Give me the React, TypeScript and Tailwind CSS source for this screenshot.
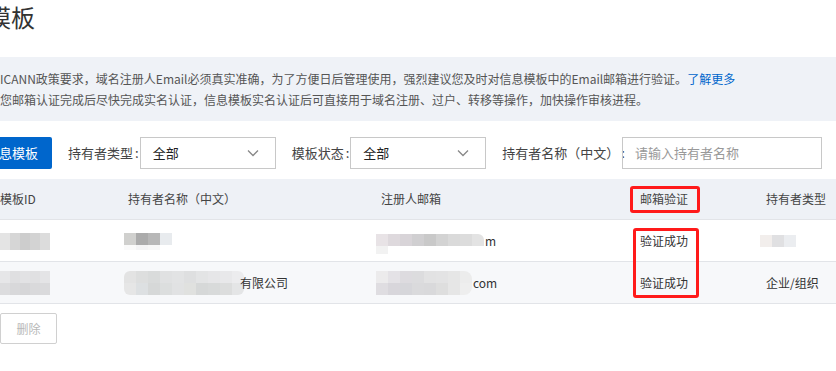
import React from "react"

const font = { fontFamily: '"Microsoft YaHei", "Noto Sans CJK SC", "Noto Sans", sans-serif' }

type MosaicProps = {
  rows: string[][],
  w?: number,
  h?: number[],
  className?: string,
}

// pixelated blur block standing in for hidden personal data
function Mosaic({ rows, w = 12, h = [], className = "" }: MosaicProps) {
  return (
    <div className={`flex flex-col ${className}`}>
      {rows.map((row, i) => (
        <div key={i} className="flex">
          {row.map((c, j) => (
            <div key={j} style={{ width: w, height: h[i] ?? 12, background: c }} />
          ))}
        </div>
      ))}
    </div>
  )
}

function Chevron() {
  return (
    <svg width="12" height="8" viewBox="0 0 12 8" fill="none" stroke="#888" strokeWidth="1.3">
      <path d="M1 1.5 L6 6.5 L11 1.5" />
    </svg>
  )
}

function Select({ className = "" }: { className?: string }) {
  return (
    <div className={`h-[32px] shrink-0 border border-[#c8c8c8] bg-white flex items-center justify-between pl-[12px] pr-[16px] ${className}`}>
      <span className="text-[13px] text-[#222]">全部</span>
      <Chevron />
    </div>
  )
}

function Label({ text, className = "" }: { text: string, className?: string }) {
  return (
    <div className={`shrink-0 whitespace-nowrap flex text-[13px] text-[#444] ${className}`}>
      <span>{text}</span>
      <span className="ml-[2px] mr-[1px]">:</span>
    </div>
  )
}

const cols = "grid grid-cols-[128px_253px_259px_126px_1fr]"

export default function App() {
  return (
    <div className="relative w-[836px] h-[371px] bg-white overflow-hidden text-[#333]" style={font}>
      <h1 className="text-[24px] leading-[30px] pt-[2px] ml-[-13px] text-[#333] font-normal">模板</h1>

      <div className="mt-[25px] h-[64px] bg-[#eff2f7] flex flex-col justify-center text-[12px] leading-[21px] text-[#555] whitespace-nowrap">
        <p>ICANN政策要求，域名注册人Email必须真实准确，为了方便日后管理使用，强烈建议您及时对信息模板中的Email邮箱进行验证。<span className="text-[#0066cc]">了解更多</span></p>
        <p>您邮箱认证完成后尽快完成实名认证，信息模板实名认证后可直接用于域名注册、过户、转移等操作，加快操作审核进程。</p>
      </div>

      <div className="mt-[16px] flex items-center h-[32px]">
        <div className="h-[32px] w-[52px] shrink-0 bg-[#0066cc] rounded-r-[2px] flex items-center text-white text-[13px] whitespace-nowrap">
          <span className="ml-[-1px]">息模板</span>
        </div>
        <Label text="持有者类型" className="ml-[16px]" />
        <Select className="w-[136px]" />
        <Label text="模板状态" className="ml-[16px]" />
        <Select className="w-[136px]" />
        <Label text="持有者名称（中文）" className="ml-[16px]" />
        <div className="h-[32px] w-[200px] shrink-0 ml-[-4px] border border-[#c8c8c8] flex items-center pl-[12px] text-[13px] text-[#999] whitespace-nowrap">请输入持有者名称</div>
      </div>

      <div className="mt-[10px] text-[12px]">
        <div className={`${cols} h-[41px] items-center bg-[#eef1f6] border-b border-[#e2e4e8] text-[#444]`}>
          <div>模板ID</div>
          <div>持有者名称（中文）</div>
          <div>注册人邮箱</div>
          <div className="relative">
            邮箱验证
            <div className="absolute left-[-10px] top-[-4px] w-[70px] h-[27px] border-[3px] border-[#ff1a1a] rounded-[3px]" />
          </div>
          <div>持有者类型</div>
        </div>

        <div className={`${cols} h-[42px] items-center border-b border-[#e2e4e8] bg-white`}>
          <div>
            <Mosaic rows={[["#e4e4e4", "#d6d6d6", "#cdcdcd", "#d3d3d3", "#dcdcdc"]]} w={10} h={[17]} className="mt-[1px]" />
          </div>
          <div className="ml-[-4px]">
            <Mosaic rows={[["#d0d0ce", "#ababab", "#b7b7b7", "#e8ebee"], ["#fafafa", "#f4f4f5", "#f7f7f7", "#ffffff"]]} h={[12, 5]} className="mt-[1px]" />
          </div>
          <div className="ml-[-5px] flex items-center">
            <Mosaic rows={[["#e8e3e6", "#ded9dd", "#d8d4d8", "#d0cfd1", "#c9c9c9", "#d3d3d3", "#dadada", "#dcdcdc", "#e3e3e3"], ["#f2f2f2", "#ffffff", "#ffffff", "#ffffff", "#ffffff", "#ffffff", "#ffffff", "#ffffff", "#ffffff"]]} h={[12, 8]} className="mt-[6px] rounded-r-[6px] overflow-hidden" />
            <span className="ml-[1px]">m</span>
          </div>
          <div>验证成功</div>
          <div className="ml-[-6px]">
            <Mosaic rows={[["#f2eeec", "#e0e0e2", "#ebedf0"]]} />
          </div>
        </div>

        <div className={`${cols} h-[42px] items-center border-b border-[#e2e4e8] bg-[#f7f8fa]`}>
          <div>
            <Mosaic rows={[["#e6e6e8", "#dfdfe1", "#e2e2e4", "#e0e0e2", "#e4e4e6"], ["#dcdcde", "#d8d8da", "#d6d6d8", "#d9d9db", "#dadadc"]]} w={10} />
          </div>
          <div className="ml-[-4px] flex items-center">
            <Mosaic rows={[["#e3e3e3", "#dddede", "#d9dbdb", "#e0e1e2", "#e2e3e4", "#dedfe0", "#e3e4e5", "#e6e6e8", "#e8e8ea", "#ececee"], ["#e6e6e6", "#dde0e2", "#d6d8d8", "#dcdede", "#e1e2e3", "#e0e1df", "#d6d8d8", "#d8dada", "#dcdddd", "#e4e5e6"]]} className="rounded-[6px] overflow-hidden" />
            <span className="ml-[-4px]">有限公司</span>
          </div>
          <div className="ml-[-5px] flex items-center">
            <Mosaic rows={[["#ecebec", "#e4e2e6", "#dddbdf", "#dcdcde", "#e2e2e3", "#e3e3e4", "#e6e6e6", "#ececec"], ["#dfdde1", "#d8d6db", "#d6d6da", "#dadadc", "#d9d9db", "#dedede", "#e6e6e6", "#eeeeee"]]} className="rounded-r-[8px] overflow-hidden" />
            <span className="ml-[1px]">com</span>
          </div>
          <div>验证成功</div>
          <div>企业/组织</div>
        </div>
      </div>

      <div className="mt-[9px] w-[57px] h-[31px] border border-[#d0d0d0] rounded-[2px] flex items-center justify-center text-[12px] text-[#b8b8b8]">删除</div>

      <div className="absolute left-[633px] top-[228px] w-[66px] h-[70px] border-[3px] border-[#ff1a1a] rounded-[3px] pointer-events-none" />
    </div>
  )
}
